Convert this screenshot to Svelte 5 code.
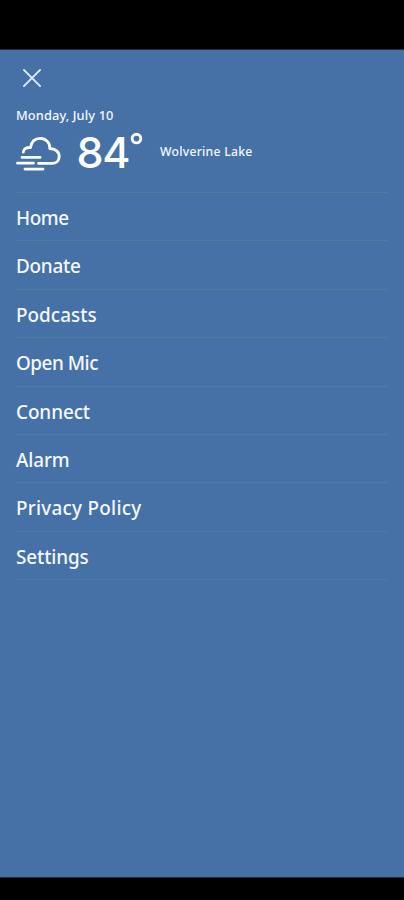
<script>
  const items = [
    { label: 'Home', width: 52.5 },
    { label: 'Donate', width: 64.5 },
    { label: 'Podcasts', width: 80.7 },
    { label: 'Open Mic', width: 82 },
    { label: 'Connect', width: 74 },
    { label: 'Alarm', width: 53.5 },
    { label: 'Privacy Policy', width: 125.5 },
    { label: 'Settings', width: 72.7 }
  ];

  // Tracks a label so that it fills the given width.
  function fit(node, width) {
    const natural = node.getBoundingClientRect().width;
    node.style.letterSpacing = `${(width - natural) / node.textContent.length}px`;
  }
</script>

<div class="screen">
  <main class="drawer">
    <button class="close" aria-label="Close">
      <svg width="20" height="20" viewBox="0 0 20 20">
        <path d="M1.4 1.4 18.6 18.6M18.6 1.4 1.4 18.6" fill="none" stroke="#dfeafb" stroke-width="1.9" />
      </svg>
    </button>
    <div class="date"><span use:fit={97.5}>Monday, July 10</span></div>
    <section class="weather">
      <svg class="fog" width="46" height="36" viewBox="0 0 46 36">
        <g fill="none" stroke="#fff" stroke-width="2.8" stroke-linecap="round" stroke-linejoin="round">
          <path d="M7.3 16.2C7.4 12.8 10.4 11.3 14.5 11.5C15.4 5.7 19 2.3 24.3 2.3C30 2.3 34.2 7 33.8 12.5C39 12.4 43.2 15.8 43.2 20.4C43.2 25 40 27.4 35.8 27.4H22.5" />
          <path d="M6 21.4H24M1.5 27.2H17.5M9 33.1H27" />
        </g>
      </svg>
      <div class="temp"><span use:fit={52.5}>84</span></div>
      <svg class="degree" width="13" height="13" viewBox="0 0 13 13">
        <circle cx="6.5" cy="6.6" r="4.3" fill="none" stroke="#fff" stroke-width="2.9" />
      </svg>
      <div class="place"><span use:fit={92.5}>Wolverine Lake</span></div>
    </section>
    <nav>
      {#each items as item}
        <a href="#menu"><span use:fit={item.width}>{item.label}</span></a>
      {/each}
    </nav>
  </main>
</div>

<style>
  :global(body) {
    margin: 0;
    background: #000;
  }
  .screen {
    box-sizing: border-box;
    height: 900px;
    padding: 49px 0 22px;
    background: #000;
    font-family: "Noto Sans", sans-serif;
    font-weight: 500;
    color: #f3f8ff;
  }
  .drawer {
    box-sizing: border-box;
    height: 829px;
    padding: 17.5px 16px 0;
    background: #4671a7;
    border-top: 1px solid #1d2f45;
    border-bottom: 1px solid #1d2f45;
  }
  span {
    display: inline-block;
    white-space: nowrap;
  }
  .close {
    display: block;
    margin: 0 0 0 6px;
    padding: 0;
    width: 20px;
    height: 20px;
    border: 0;
    background: none;
  }
  .close svg {
    display: block;
  }
  .date {
    margin-top: 18.5px;
    height: 19px;
    line-height: 18px;
    font-size: 12.8px;
  }
  .weather {
    display: flex;
    height: 67px;
  }
  .fog {
    margin-top: 11px;
  }
  .temp {
    margin: 0 0 0 14.5px;
    width: 53.5px;
    line-height: 54px;
    font-family: Inter, sans-serif;
    font-size: 43px;
    color: #fff;
  }
  .degree {
    margin: 7px 0 0;
  }
  .place {
    margin: 18px 0 0 17px;
    line-height: 18px;
    font-size: 12.2px;
  }
  nav {
    border-top: 1px solid #5779a1;
  }
  a {
    display: block;
    box-sizing: border-box;
    height: 48.4px;
    border-bottom: 1px solid #5779a1;
    line-height: 50px;
    font-size: 18.9px;
    color: inherit;
    text-decoration: none;
  }
</style>
